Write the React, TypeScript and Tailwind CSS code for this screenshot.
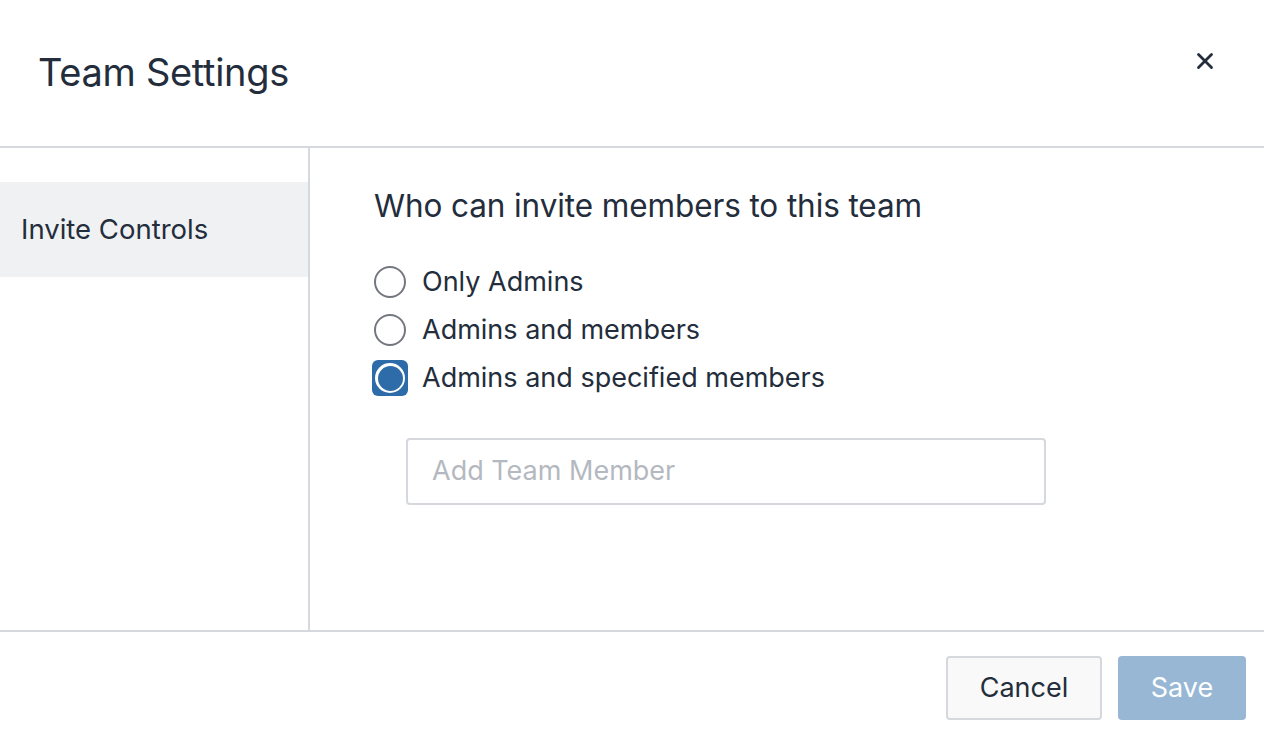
import { X } from 'lucide-react';

const options = [
  { label: 'Only Admins', selected: false },
  { label: 'Admins and members', selected: false },
  { label: 'Admins and specified members', selected: true },
];

function Radio({ selected }: { selected: boolean }) {
  if (selected) {
    return (
      <span className="flex h-[36px] w-[36px] shrink-0 items-center justify-center rounded-[6px] bg-[#2d6ca8]">
        <span className="flex h-[30px] w-[30px] items-center justify-center rounded-full bg-white">
          <span className="h-[25px] w-[25px] rounded-full bg-[#2d6ca8]" />
        </span>
      </span>
    );
  }
  return (
    <span className="flex h-[36px] w-[36px] shrink-0 items-center justify-center">
      <span className="h-[32px] w-[32px] rounded-full border-2 border-[#74787e] bg-white" />
    </span>
  );
}

export default function App() {
  return (
    <div
      className="flex h-[742px] w-[1264px] flex-col bg-white text-[#232d3c]"
      style={{ fontFamily: 'Inter, "Noto Sans", sans-serif' }}
    >
      {/* Header */}
      <div className="flex h-[148px] shrink-0 items-start justify-between border-b-2 border-[#d5d8dc]">
        <h1 className="pl-[38px] pt-[50px] text-[38px] leading-[44px] font-normal tracking-[-0.3px]">
          Team Settings
        </h1>
        <button className="mr-[46px] mt-[48px] text-[#232d3c]">
          <X size={26} strokeWidth={2.6} />
        </button>
      </div>

      {/* Body */}
      <div className="flex min-h-0 flex-1">
        <aside className="w-[310px] shrink-0 border-r-2 border-[#d5d8dc] pt-[34px]">
          <div className="flex h-[95px] items-center bg-[#f0f1f3] pl-[21px] text-[27.5px]">
            Invite Controls
          </div>
        </aside>

        <section className="flex-1 pl-[64px] pt-[38px]">
          <h2 className="text-[31.5px] leading-[40px] font-normal tracking-[-0.1px]">
            Who can invite members to this team
          </h2>
          <div className="mt-[32px] flex flex-col">
            {options.map((o) => (
              <label key={o.label} className="flex h-[48px] items-center gap-[14px] text-[27px]">
                <span className="-ml-[2px]">
                  <Radio selected={o.selected} />
                </span>
                <span>{o.label}</span>
              </label>
            ))}
          </div>
          <div className="ml-[32px] mt-[36px] flex h-[67px] w-[640px] items-center rounded-[4px] border-2 border-[#d5d8dc] pl-[24px]">
            <input
              className="w-full bg-transparent text-[27px] outline-none placeholder:text-[#b4b9bf]"
              placeholder="Add Team Member"
            />
          </div>
        </section>
      </div>

      {/* Footer */}
      <div className="flex h-[112px] shrink-0 items-center justify-end gap-[16px] border-t-2 border-[#d5d8dc] pr-[18px] pt-[2px]">
        <button className="h-[64px] w-[156px] rounded-[4px] border-2 border-[#d5d8dc] bg-[#f9f9f9] text-[27px] text-[#232d3c]">
          Cancel
        </button>
        <button className="h-[64px] w-[128px] rounded-[4px] bg-[#97b7d5] text-[27px] text-white">
          Save
        </button>
      </div>
    </div>
  );
}
